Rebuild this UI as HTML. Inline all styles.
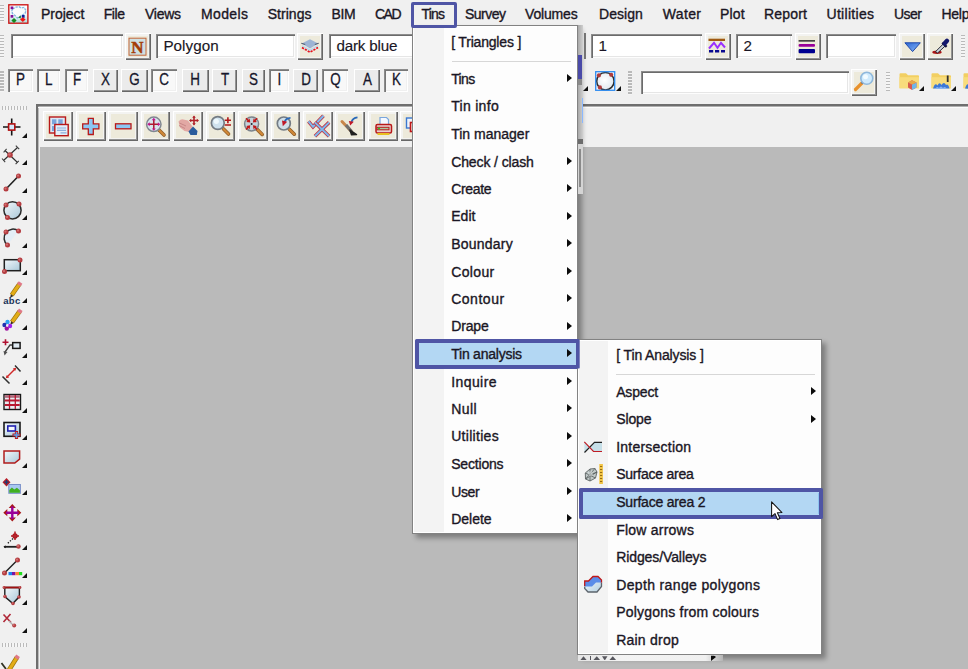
<!DOCTYPE html><html><head><meta charset="utf-8"><title>Tins - Tin analysis - Surface area 2</title><style>
html,body{margin:0;padding:0}
body{width:968px;height:669px;overflow:hidden;background:#f0f0f0;position:relative;font-family:"Liberation Sans",sans-serif;color:#141418;font-size:14px}
.a{position:absolute}
.t{position:absolute;white-space:nowrap;line-height:20px;height:20px;-webkit-text-stroke:.35px #1a1624;color:#1a1624}
.inp{position:absolute;background:#fff;box-shadow:inset 1px 1px 0 #8c8c8c,inset 2px 2px 0 #6b6b6b,inset -1px -1px 0 #fdfdfd,inset -2px -2px 0 #e6e6e6;font-size:15.2px;line-height:24.4px;white-space:nowrap;overflow:hidden;box-sizing:border-box;padding-left:7.4px;color:#1a1624;-webkit-text-stroke:.15px #1a1624}
.btn{position:absolute;background:#f3f3f1;box-shadow:inset 1px 1px 0 #ffffff,inset -1px -1px 0 #676767,inset -2px -2px 0 #939393;box-sizing:border-box}
.btn .f{position:absolute;left:3px;top:2.6px;right:2.7px;bottom:3px;background:#edeadb}
.btn svg{position:absolute;left:0;top:0}
.lb{position:absolute;box-sizing:border-box;text-align:center;font-size:16.8px;line-height:21.6px;color:#15152a}
.lb span{display:inline-block;transform:scaleX(.8);-webkit-text-stroke:.3px #15152a;position:relative;left:.5px}
.lb.up{background:#ebebeb;box-shadow:inset 1px 1px 0 #ffffff,inset -1px -1px 0 #676767,inset -2px -2px 0 #939393}
.lb.dn{background:#f8f8f8;box-shadow:inset 1px 1px 0 #8c8c8c,inset 2px 2px 0 #777,inset -1px -1px 0 #fff,inset -2px -2px 0 #f0f0f0}
.gv{position:absolute;width:4px;background:repeating-linear-gradient(to bottom,#bababa 0,#bababa 1.5px,#f5f5f5 1.5px,#f5f5f5 3px)}
.gh{position:absolute;height:4px;background:repeating-linear-gradient(to right,#bababa 0,#bababa 1.5px,#f5f5f5 1.5px,#f5f5f5 3px)}
.tri{position:absolute;width:0;height:0;border-left:5px solid transparent;border-bottom:5px solid #111}
.menu{position:absolute;background:#fdfdfd;box-sizing:border-box;border:1px solid #828282;box-shadow:4px 4px 5px rgba(0,0,0,.33)}
.menu::after{content:"";position:absolute;left:0;top:0;right:0;bottom:0;border:1px solid #fff}
.menu .gut{position:absolute;left:0;top:0;bottom:0;background:#f3f3f3}
.menu .sep{position:absolute;height:1px;background:#d7d7d7}
.arr{position:absolute;width:0;height:0;border-top:4.7px solid transparent;border-bottom:4.7px solid transparent;border-left:5.8px solid #0c0c0c}
  .hl{position:absolute;box-sizing:border-box;border:4.5px solid #4f55a5;background:#b3d7f3;border-radius:1.5px}
svg{overflow:visible}
</style></head><body>
<div class="gv" style="left:0;top:5px;height:17px"></div>
<svg class="a" style="left:8.2px;top:4px" width="21" height="20" viewBox="0 0 21 20">
<defs><linearGradient id="ag" x1="0" y1="0" x2="0" y2="1"><stop offset="0" stop-color="#ffffff"/><stop offset=".55" stop-color="#f0f6f8"/><stop offset="1" stop-color="#a8dcd8"/></linearGradient></defs>
<rect x="0.8" y="0.8" width="19.1" height="18.4" fill="url(#ag)" stroke="#cc1414" stroke-width="1.35"/>
<path d="M4.5 5 L8 3.2 L11 2.6 L13 4 L16 3.4 L18 6.5 L17 9.5 L13.5 11.5 L9.5 14 L7 11.5 L4.5 9.5 L3.8 7 Z" fill="#fbfdfd" stroke="#7ab4e0" stroke-width="1.3" stroke-dasharray="2.4 1" opacity=".95"/>
<rect x="2.6" y="2.5" width="2.7" height="2.7" fill="#80109c"/><rect x="2.6" y="11" width="2.7" height="2.7" fill="#80109c"/>
<rect x="13.8" y="11" width="2.8" height="2.8" fill="#101c98"/><path d="M10 13.5 l2.8 -2 v3 z" fill="#1c7a2c"/>
<path d="M6 14 l2.6 2.5 -2.6 2.5 -2.6 -2.5 z" fill="#138a20"/>
<path d="M14.8 13.2 l2.8 2.4 -2.8 2.4 -2.8 -2.4 z" fill="#f41414"/>
</svg>
<div class="t" style="left:41.00px;top:4.45px;letter-spacing:-0.012px;">Project</div>
<div class="t" style="left:103.75px;top:4.45px;letter-spacing:-0.436px;">File</div>
<div class="t" style="left:145.00px;top:4.45px;letter-spacing:-0.273px;">Views</div>
<div class="t" style="left:201.00px;top:4.45px;letter-spacing:0.374px;">Models</div>
<div class="t" style="left:267.75px;top:4.45px;letter-spacing:0.030px;">Strings</div>
<div class="t" style="left:331.50px;top:4.45px;letter-spacing:-0.320px;">BIM</div>
<div class="t" style="left:375.00px;top:4.45px;letter-spacing:-1.529px;">CAD</div>
<div class="t" style="left:421.50px;top:4.45px;letter-spacing:-0.810px;">Tins</div>
<div class="t" style="left:465.00px;top:4.45px;letter-spacing:-0.515px;">Survey</div>
<div class="t" style="left:525.00px;top:4.45px;letter-spacing:-0.158px;">Volumes</div>
<div class="t" style="left:599.00px;top:4.45px;letter-spacing:0.034px;">Design</div>
<div class="t" style="left:662.75px;top:4.45px;letter-spacing:0.358px;">Water</div>
<div class="t" style="left:720.00px;top:4.45px;letter-spacing:0.209px;">Plot</div>
<div class="t" style="left:764.00px;top:4.45px;letter-spacing:0.196px;">Report</div>
<div class="t" style="left:826.50px;top:4.45px;letter-spacing:0.298px;">Utilities</div>
<div class="t" style="left:894.00px;top:4.45px;letter-spacing:-0.520px;">User</div>
<div class="t" style="left:941.50px;top:4.45px;letter-spacing:-0.264px;">Help</div>
<div class="gv" style="left:0;top:35px;height:23px"></div>
<div class="inp" style="left:11px;top:34px;width:111.5px;height:23.5px"></div>
<div class="btn" style="left:125px;top:33px;width:25.900000000000006px;height:26.700000000000003px"><div class="f"></div><svg width="26" height="27"><rect x="4" y="5.2" width="17" height="17" fill="#cfe0e2" stroke="#c4673a" stroke-width="1"/><text x="12.5" y="20" text-anchor="middle" font-family="Liberation Serif,serif" font-weight="bold" font-size="17" fill="#a43c08" stroke="#a43c08" stroke-width=".5">N</text></svg></div>
<div class="inp" style="left:156px;top:34px;width:138.5px;height:23.5px"><span style="letter-spacing:0.062px">Polygon</span></div>
<div class="btn" style="left:297px;top:33px;width:26px;height:26.700000000000003px"><div class="f"></div><svg width="26" height="27"><path d="M4.8 10.6 L13 6.3 L21.2 10.6 L13 15.4 Z" fill="#9db4d4"/><path d="M5 12 L13 16.2 L21 12 L21 13.6 L13 18.2 L5 13.6 Z" fill="#bcd8ec"/><path d="M4.3 10.3 L8.2 11.6 M21.7 10.3 L17.8 11.6" stroke="#566070" stroke-width="1.1"/><path d="M5 14.6 L13 19.2 L21 14.6" fill="none" stroke="#e8101c" stroke-width="1.7" stroke-dasharray="2.2 1.1"/></svg></div>
<div class="inp" style="left:329px;top:34px;width:141px;height:23.5px"><span style="letter-spacing:-0.166px">dark blue</span></div>
<div class="a" style="left:583.5px;top:32.5px;width:2px;height:26.5px;background:#7a7a7a"></div>
<div class="inp" style="left:591px;top:34px;width:111px;height:23.5px">1</div>
<div class="btn" style="left:705px;top:33px;width:25.799999999999955px;height:26.700000000000003px"><div class="f"></div><svg width="26" height="27"><rect x="3.5" y="5.7" width="16.5" height="2.3" fill="#a05a12"/><path d="M4 15.5 L9 9.8 L12.5 14.8 L16 9.8 L20 14.5" fill="none" stroke="#9a30ff" stroke-width="2"/><path d="M4 18.2 h16" stroke="#0a0a90" stroke-width="2.4" stroke-dasharray="4.2 1.8"/></svg></div>
<div class="inp" style="left:736px;top:34px;width:56px;height:23.5px">2</div>
<div class="btn" style="left:795px;top:33px;width:25.799999999999955px;height:26.700000000000003px"><div class="f"></div><svg width="26" height="27"><rect x="3.6" y="7" width="16.4" height="1.7" fill="#454545"/><rect x="3.6" y="11" width="16.4" height="2.7" rx="1" fill="#98009a"/><rect x="3.6" y="16" width="16.4" height="4.2" rx="1" fill="#000090"/></svg></div>
<div class="inp" style="left:826px;top:34px;width:70px;height:23.5px"></div>
<div class="btn" style="left:898.5px;top:33px;width:26.200000000000045px;height:26.700000000000003px"><div class="f"></div><svg width="26" height="27"><defs><linearGradient id="tg" x1="0" y1="0" x2="1" y2="1"><stop offset="0" stop-color="#2a66d8"/><stop offset="1" stop-color="#8ab8f4"/></linearGradient></defs><path d="M5.9 9.8 L21.3 9.8 L13.6 18.6 Z" fill="url(#tg)" stroke="#1f48a8" stroke-width="1"/></svg></div>
<div class="btn" style="left:927.2px;top:33px;width:26.199999999999932px;height:26.700000000000003px"><div class="f"></div><svg width="26" height="27"><ellipse cx="10" cy="19.2" rx="4.7" ry="1.7" fill="#a81414"/><path d="M8.6 18.6 L16.6 10.6 L18.6 12.6 L10.6 20 Z" fill="#cfd6dc" stroke="#2a2a34" stroke-width="1"/><path d="M15.3 9.6 L19.6 13.9" stroke="#14143c" stroke-width="2.2"/><path d="M17.6 10.4 L20 7.8" stroke="#14186c" stroke-width="4.4" stroke-linecap="round"/></svg></div>
<div class="gv" style="left:961px;top:35px;height:23.5px"></div>
<div class="gv" style="left:0;top:71px;height:21px"></div>
<div class="lb dn" style="left:8px;top:69px;width:25px;height:23.3px"><span>P</span></div>
<div class="lb dn" style="left:37px;top:69px;width:23px;height:23.3px"><span>L</span></div>
<div class="lb dn" style="left:64.5px;top:69px;width:23.5px;height:23.3px"><span>F</span></div>
<div class="lb up" style="left:92.5px;top:69px;width:25.0px;height:23.3px"><span>X</span></div>
<div class="lb up" style="left:121px;top:69px;width:27px;height:23.3px"><span>G</span></div>
<div class="lb dn" style="left:151px;top:69px;width:26px;height:23.3px"><span>C</span></div>
<div class="lb up" style="left:181.5px;top:69px;width:27.0px;height:23.3px"><span>H</span></div>
<div class="lb up" style="left:212px;top:69px;width:24.5px;height:23.3px"><span>T</span></div>
<div class="lb up" style="left:242px;top:69px;width:23px;height:23.3px"><span>S</span></div>
<div class="lb dn" style="left:269px;top:69px;width:20px;height:23.3px"><span>I</span></div>
<div class="lb up" style="left:292.5px;top:69px;width:25.5px;height:23.3px"><span>D</span></div>
<div class="lb dn" style="left:322px;top:69px;width:25.5px;height:23.3px"><span>Q</span></div>
<div class="lb up" style="left:354px;top:69px;width:26px;height:23.3px"><span>A</span></div>
<div class="lb dn" style="left:384px;top:69px;width:24px;height:23.3px"><span>K</span></div>
<div class="tri" style="left:583px;top:86px"></div>
<svg class="a" style="left:595px;top:71.4px;overflow:hidden" width="21" height="20"><defs><radialGradient id="cg" cx=".45" cy=".45" r=".6"><stop offset="0" stop-color="#ffffff"/><stop offset="1" stop-color="#dfe6ee"/></radialGradient></defs><rect x="0.7" y="0.7" width="19" height="18.6" fill="#f2f5fa"/><circle cx="10.4" cy="10.2" r="8.7" fill="url(#cg)" stroke="#2c2c2c" stroke-width="1.5"/><rect x="0.7" y="0.7" width="19" height="18.6" fill="none" stroke="#2f8cf0" stroke-width="1.3"/><circle cx="3.9" cy="4.4" r="2.1" fill="#b03c3c"/><circle cx="16.2" cy="3.8" r="2.1" fill="#b03c3c"/><circle cx="4.9" cy="16.4" r="2.1" fill="#b03c3c"/></svg>
<div class="tri" style="left:615.5px;top:86px"></div>
<div class="gv" style="left:628px;top:71px;height:24px"></div>
<div class="inp" style="left:641px;top:71px;width:207.5px;height:22.5px"></div>
<div class="btn" style="left:851.2px;top:69.3px;width:25.59999999999991px;height:26.400000000000006px"><div class="f"></div><svg width="26" height="27"><path d="M11.5 13.5 L4.5 20.5" stroke="#e8912c" stroke-width="3.2" stroke-linecap="round"/><path d="M12.8 12 L10.5 14.5" stroke="#707880" stroke-width="2.2"/><circle cx="15.8" cy="9.2" r="6" fill="#cfeafc" stroke="#8fb8dc" stroke-width="1.6"/><circle cx="14.5" cy="7.8" r="2.5" fill="#f2fbff"/></svg></div>
<div class="gv" style="left:886px;top:72px;height:19px"></div>
<svg class="a" style="left:899px;top:72.5px" width="21" height="17"><path d="M0.5 1.3 Q0.5 0.3 1.5 0.3 L7 0.3 L9 2.3 L19 2.3 Q20 2.3 20 3.3 L20 15 L0.5 15 Z" fill="#f2cf62"/><path d="M0.5 4.2 L20 4.2 L20 15.5 L0.5 15.5 Z" fill="#f8dc7c"/><path d="M9 9.5 L13 7.2 L17.5 9.5 L17.5 14.5 L13 17 L9 14.5 Z" fill="#d85a50"/><path d="M13 11.5 L17.5 9.5 L17.5 14.5 L13 17 Z" fill="#6fb6ea"/><path d="M9 9.5 L13 7.2 L17.5 9.5 L13 11.5 Z" fill="#e8a848"/></svg>
<div class="tri" style="left:918.7px;top:85.5px"></div>
<svg class="a" style="left:931px;top:72.5px" width="21" height="17"><path d="M0.5 1.3 Q0.5 0.3 1.5 0.3 L7 0.3 L9 2.3 L19 2.3 Q20 2.3 20 3.3 L20 15 L0.5 15 Z" fill="#f2cf62"/><path d="M0.5 4.2 L20 4.2 L20 15.5 L0.5 15.5 Z" fill="#f8dc7c"/><rect x="15.8" y="2.5" width="1.8" height="6.5" fill="#303030"/><path d="M2 15.5 Q4 9 6.5 12.5 Q8.5 8.5 10.5 12 Q13 8 15 12 Q17 10 18.5 15.5 Z" fill="#3c78d8"/><path d="M4 16 Q6 12.5 8 15 Q10 12 12 15 Q14 12.5 16 16 Z" fill="#8ab4f0"/></svg>
<div class="tri" style="left:951px;top:85.5px"></div>
<svg class="a" style="left:963px;top:72.5px" width="21" height="17"><path d="M0.5 1.3 Q0.5 0.3 1.5 0.3 L7 0.3 L9 2.3 L19 2.3 Q20 2.3 20 3.3 L20 15 L0.5 15 Z" fill="#f2cf62"/><path d="M0.5 4.2 L20 4.2 L20 15.5 L0.5 15.5 Z" fill="#f8dc7c"/><path d="M2 15.5 Q4 9 6.5 12.5 L6.5 16 Z" fill="#3c78d8"/></svg>
<div class="a" style="left:36px;top:104.1px;width:940px;height:600px;background:#f0f0f0;box-shadow:inset 2.4px 2.6px 0 #6e6e6e"></div>
<div class="a" style="left:38.4px;top:106.7px;width:940px;height:1px;background:#fbfbfb"></div>
<div class="a" style="left:40px;top:147px;width:940px;height:540px;background:#bababa"></div>
<div class="btn" style="left:43.40px;top:111.4px;width:29.7px;height:29.9px"><div class="f"></div><svg width="30" height="30" style="left:.5px;top:.8px"><rect x="5.5" y="5" width="16" height="16" fill="#dce8f4" stroke="#b81818" stroke-width="1.4"/><rect x="8" y="7.3" width="4.4" height="5" fill="#7aa6dc"/><rect x="14.3" y="7.3" width="4.4" height="5" fill="#7aa6dc"/><rect x="8" y="14" width="3" height="5" fill="#7aa6dc"/><rect x="10.8" y="12.5" width="13.4" height="11.2" fill="#e4eef8" stroke="#b81818" stroke-width="1.4"/><path d="M13 16 h9 M13 18.3 h9 M16.5 20.8 h6" stroke="#8cb0dc" stroke-width="1.2"/></svg></div>
<div class="btn" style="left:75.85px;top:111.4px;width:29.7px;height:29.9px"><div class="f"></div><svg width="30" height="30" style="left:.5px;top:.8px"><path d="M12.3 6.3 h5 v5.6 h5.6 v5 h-5.6 v5.6 h-5 v-5.6 h-5.6 v-5 h5.6 z" fill="#8cc6f2" stroke="#b81818" stroke-width="1.3"/></svg></div>
<div class="btn" style="left:108.30px;top:111.4px;width:29.7px;height:29.9px"><div class="f"></div><svg width="30" height="30" style="left:.5px;top:.8px"><rect x="6.5" y="11.8" width="15.5" height="5" fill="#8cc6f2" stroke="#b81818" stroke-width="1.3"/></svg></div>
<div class="btn" style="left:140.75px;top:111.4px;width:29.7px;height:29.9px"><div class="f"></div><svg width="30" height="30" style="left:.5px;top:.8px"><path d="M18 18 L23 23" stroke="#8a5a28" stroke-width="3.6" stroke-linecap="round"/><path d="M18 18 L23 23" stroke="#d08838" stroke-width="2.2" stroke-linecap="round"/><circle cx="12.8" cy="12.3" r="7.2" fill="#d8e4ee" stroke="#808890" stroke-width="1.5"/><path d="M7.5 12.3 h10.6 M12.8 7 v10.6" stroke="#b01830" stroke-width="1.5"/><path d="M12.8 5.8 l2 2.4 h-4 z M12.8 18.8 l2 -2.4 h-4 z M6.3 12.3 l2.4 -2 v4 z M19.3 12.3 l-2.4 -2 v4 z" fill="#c01890"/></svg></div>
<div class="btn" style="left:173.20px;top:111.4px;width:29.7px;height:29.9px"><div class="f"></div><svg width="30" height="30" style="left:.5px;top:.8px"><path d="M4.5 9.5 Q7 6.5 9.5 7.5 L14 8.5 L18.5 14.5 L15.5 20 L10.5 19 L6 15.5 Z" fill="#e2a8a4"/><path d="M5.5 11 L12 14 M5 13.5 L11 16.5" stroke="#c88888" stroke-width="1"/><path d="M14.5 19.5 L19 14.5 L23.5 19 L22.8 23 L16.5 23 Z" fill="#2a5c9c"/><path d="M16 8.5 h8 M20 4.5 v8" stroke="#b02028" stroke-width="1.6"/><path d="M20 3.5 l1.8 2.2 h-3.6 z M20 13.5 l1.8 -2.2 h-3.6 z M15 8.5 l2.2 -1.8 v3.6 z M25 8.5 l-2.2 -1.8 v3.6 z" fill="#b02028"/></svg></div>
<div class="btn" style="left:205.65px;top:111.4px;width:29.7px;height:29.9px"><div class="f"></div><svg width="30" height="30" style="left:.5px;top:.8px"><path d="M17.5 17 L22.5 22" stroke="#8a5a28" stroke-width="3.6" stroke-linecap="round"/><path d="M17.5 17 L22.5 22" stroke="#d08838" stroke-width="2.2" stroke-linecap="round"/><circle cx="11.8" cy="11" r="6.4" fill="#cfe2ee" stroke="#747c84" stroke-width="1.7"/><circle cx="10.3" cy="9.3" r="2.6" fill="#eef8fc"/><path d="M18.8 8.2 h6.2 M21.9 5.2 v6 M18.8 13 h6.2" stroke="#b01818" stroke-width="1.6"/></svg></div>
<div class="btn" style="left:238.10px;top:111.4px;width:29.7px;height:29.9px"><div class="f"></div><svg width="30" height="30" style="left:.5px;top:.8px"><path d="M18.3 17.5 L23.2 22.4" stroke="#8a5a28" stroke-width="3.6" stroke-linecap="round"/><path d="M18.3 17.5 L23.2 22.4" stroke="#d08838" stroke-width="2.2" stroke-linecap="round"/><circle cx="12.6" cy="11.9" r="7" fill="#c4d2da" stroke="#7c848c" stroke-width="1.5"/><path d="M7.0 6.3 L9.6 8.9 M7.0 17.5 L9.6 14.9 M18.2 6.3 L15.6 8.9 M18.2 17.5 L15.6 14.9" stroke="#c01818" stroke-width="1.5"/><path d="M11.3 10.6 L7.3 9.9 L10.6 6.6 Z M11.3 13.2 L7.3 13.9 L10.6 17.2 Z M13.9 10.6 L17.9 9.9 L14.6 6.6 Z M13.9 13.2 L17.9 13.9 L14.6 17.2 Z" fill="#c01818"/><circle cx="12.6" cy="11.9" r="1" fill="#202830"/></svg></div>
<div class="btn" style="left:270.55px;top:111.4px;width:29.7px;height:29.9px"><div class="f"></div><svg width="30" height="30" style="left:.5px;top:.8px"><path d="M18.3 17.2 L23.3 22.2" stroke="#8a5a28" stroke-width="3.6" stroke-linecap="round"/><path d="M18.3 17.2 L23.3 22.2" stroke="#d08838" stroke-width="2.2" stroke-linecap="round"/><circle cx="12.8" cy="11.5" r="6.5" fill="#d0dfe9" stroke="#747c84" stroke-width="1.7"/><path d="M19.5 5.8 Q15 6 13.5 10" fill="none" stroke="#2868b8" stroke-width="1.8"/><path d="M11 8.6 l5.2 1.2 -4.4 4.4 z" fill="#c01828"/></svg></div>
<div class="btn" style="left:303.00px;top:111.4px;width:29.7px;height:29.9px"><div class="f"></div><svg width="30" height="30" style="left:.5px;top:.8px"><path d="M4.5 9.3 L9 14.8 L19.5 3.8" fill="none" stroke="#c03444" stroke-width="3.6"/><path d="M4.5 9.3 L9 14.8 L19.5 3.8" fill="none" stroke="#7cb8ee" stroke-width="2"/><path d="M10.9 10.4 L25.1 24.2 M25.1 10.4 L10.9 24.2" stroke="#c03444" stroke-width="3.6"/><path d="M10.9 10.4 L25.1 24.2 M25.1 10.4 L10.9 24.2" stroke="#7cb8ee" stroke-width="2"/></svg></div>
<div class="btn" style="left:335.45px;top:111.4px;width:29.7px;height:29.9px"><div class="f"></div><svg width="30" height="30" style="left:.5px;top:.8px"><path d="M6 9.5 L15 19" stroke="#c8864a" stroke-width="3" stroke-linecap="round"/><path d="M10 13 L15.5 19.5" stroke="#707070" stroke-width="3.2"/><path d="M14 18 L20.5 22.5 L15.5 22.8 Z" fill="#202020" stroke="#202020" stroke-width="1.5" stroke-linejoin="round"/><path d="M21.5 5.3 Q16.5 5.8 15.5 10" fill="none" stroke="#2868b8" stroke-width="1.8"/><path d="M12.8 9 l5 0.8 -3.6 3.8 z" fill="#c01828"/></svg></div>
<div class="btn" style="left:367.90px;top:111.4px;width:29.7px;height:29.9px"><div class="f"></div><svg width="30" height="30" style="left:.5px;top:.8px"><path d="M12 5.5 h6.5 l2 2 v6 h-8.5 z" fill="#f4f8ff" stroke="#7aa6dc" stroke-width="1.2"/><rect x="8" y="12.5" width="15.5" height="8.5" rx="1.5" fill="#e8d0d0" stroke="#b81818" stroke-width="1.5"/><rect x="9" y="15.3" width="12" height="2.5" fill="#a8c8a0" stroke="#b81818" stroke-width="1"/><path d="M9.5 22 h12" stroke="#e8c020" stroke-width="2"/><circle cx="11" cy="16.5" r="1" fill="#20c020"/></svg></div>
<div class="btn" style="left:400.35px;top:111.4px;width:29.7px;height:29.9px"><div class="f"></div><svg width="30" height="30" style="left:.5px;top:.8px"><rect x="5.5" y="6" width="10" height="10" fill="#eef4fc" stroke="#3a78d0" stroke-width="1.4"/><rect x="9.5" y="10.5" width="8" height="9" fill="#f8e8e8" stroke="#c01818" stroke-width="1.6"/></svg></div>
<div class="gh" style="left:2px;top:105.5px;width:25px"></div>
<div class="gh" style="left:2px;top:642.8px;width:25px"></div>
<svg class="a" style="left:0;top:0" width="36" height="669"><defs><linearGradient id="lg" x1="0" y1="0" x2="1" y2="1"><stop offset="0" stop-color="#f4f8fb"/><stop offset="1" stop-color="#a8c8d8"/></linearGradient></defs>
<path d="M3 127 h17.5 M11.7 118.5 v17" stroke="#151515" stroke-width="1.6"/><rect x="8.6" y="123.9" width="6.2" height="6.2" fill="#d4e8fa" stroke="#b01010" stroke-width="1.6"/>
<path d="M3.5 160.5 L17.5 147.5 M5 150.5 L17.5 162.5" stroke="#303030" stroke-width="1.15"/><path d="M2 158.5 l3.2 3.6 M15.8 145.6 l3.4 3.6 M3.6 152.3 l3 -3.4 M15.6 164.2 l3.2 -3.4" stroke="#404040" stroke-width="1.1"/><circle cx="10" cy="155" r="2.8" fill="#b43c40"/><circle cx="9.5" cy="154.5" r="1.26" fill="#d07070"/>
<path d="M6 189 L18.5 176" stroke="#202020" stroke-width="1.6"/><circle cx="6" cy="189" r="2.5" fill="#b43c40"/><circle cx="5.5" cy="188.5" r="1.125" fill="#d07070"/><circle cx="18.5" cy="176" r="2.5" fill="#b43c40"/><circle cx="18.0" cy="175.5" r="1.125" fill="#d07070"/>
<circle cx="12.5" cy="210.3" r="8.6" fill="url(#lg)" stroke="#2a2a2a" stroke-width="1.5"/><circle cx="6" cy="205" r="2.5" fill="#b43c40"/><circle cx="5.5" cy="204.5" r="1.125" fill="#d07070"/><circle cx="19" cy="204" r="2.5" fill="#b43c40"/><circle cx="18.5" cy="203.5" r="1.125" fill="#d07070"/><circle cx="7.5" cy="217.5" r="2.5" fill="#b43c40"/><circle cx="7.0" cy="217.0" r="1.125" fill="#d07070"/>
<path d="M18.5 231 A8.8 8.8 0 0 0 7.5 245" fill="#e4eef6" stroke="#2a2a2a" stroke-width="1.5"/><circle cx="6" cy="232" r="2.5" fill="#b43c40"/><circle cx="5.5" cy="231.5" r="1.125" fill="#d07070"/><circle cx="18.5" cy="231" r="2.5" fill="#b43c40"/><circle cx="18.0" cy="230.5" r="1.125" fill="#d07070"/><circle cx="7.5" cy="245" r="2.5" fill="#b43c40"/><circle cx="7.0" cy="244.5" r="1.125" fill="#d07070"/>
<rect x="4.3" y="259.7" width="16" height="11" fill="url(#lg)" stroke="#202020" stroke-width="1.5"/><circle cx="20" cy="260" r="2.5" fill="#b43c40"/><circle cx="19.5" cy="259.5" r="1.125" fill="#d07070"/><circle cx="4.5" cy="271.5" r="2.5" fill="#b43c40"/><circle cx="4.0" cy="271.0" r="1.125" fill="#d07070"/>
<path d="M11.8 295 L19.6 283.8" stroke="#9a7208" stroke-width="4.6"/><path d="M11.8 295 L19.6 283.8" stroke="#e2ac18" stroke-width="3.2"/><path d="M18.8 285 L20.6 282.4" stroke="#e07888" stroke-width="4.4"/><path d="M10 298 l0.9 -3.8 2.6 1.8 z" fill="#3a3020"/><text x="3.2" y="303.8" font-size="9.5" font-weight="bold" fill="#1a3358" font-family="Liberation Sans,sans-serif" textLength="17">abc</text>
<path d="M12 322 L19.8 311.2" stroke="#9a7208" stroke-width="4.6"/><path d="M12 322 L19.8 311.2" stroke="#e2ac18" stroke-width="3.2"/><path d="M19 312.4 L20.8 309.8" stroke="#e07888" stroke-width="4.4"/><path d="M10.2 325 l0.9 -3.8 2.6 1.8 z" fill="#3a3020"/><circle cx="7.5" cy="322" r="2.2" fill="#30a0f0"/><circle cx="4.5" cy="325" r="2.2" fill="#2030b0"/><circle cx="10" cy="326" r="2.2" fill="#a020f0"/><circle cx="6.8" cy="328.5" r="2.2" fill="#a010a0"/><circle cx="7.2" cy="325.5" r="1.2" fill="#f0f0f0"/>
<path d="M2.5 342.3 h6 M5.5 339.3 v6" stroke="#b01030" stroke-width="1.6"/><path d="M12.5 345 h-2.5 L5 352" fill="none" stroke="#404040" stroke-width="1.3"/><path d="M3.5 351 l1 4.5 3 -3.5 z" fill="#505050"/><rect x="12.7" y="342.6" width="7.4" height="5.8" fill="#dfeaf2" stroke="#181818" stroke-width="1.5"/>
<path d="M2.5 376.5 L9.5 383.5 M15 365.5 L20.5 371.5" stroke="#303030" stroke-width="1.5"/><path d="M6.5 377.5 L15.5 368.5" stroke="#d02828" stroke-width="1.4"/><path d="M5.8 378.3 l3.4 -0.8 -2.4 -2.4 z M16.2 367.7 l-3.4 0.8 2.4 2.4 z" fill="#d02828"/>
<rect x="4" y="394.5" width="16.5" height="15" fill="#e8eef2" stroke="#181818" stroke-width="1.4"/><rect x="4.7" y="395.2" width="15.1" height="2.6" fill="#b0687a"/><path d="M4.7 400.5 h15 M4.7 405 h15" stroke="#b81830" stroke-width="1.8"/><path d="M9.5 395 v14 M15.3 395 v14" stroke="#b81830" stroke-width="1.3"/>
<rect x="4" y="422.5" width="16" height="13.8" fill="url(#lg)" stroke="#181818" stroke-width="1.6"/><rect x="7.8" y="426" width="7.6" height="5" fill="#f4f8fc" stroke="#2020b0" stroke-width="1.6"/><path d="M16.5 431 v8 M12.5 435 h8" stroke="#c01818" stroke-width="3.2"/><path d="M16.5 432 v6 M13.5 435 h6" stroke="#58a0e8" stroke-width="1.6"/>
<path d="M4 451 h15.6 v8.2 l-4.8 3.8 h-10.8 z" fill="url(#lg)" stroke="#b01c1c" stroke-width="1.5"/>
<path d="M6.5 478 l4 4.2 -4 4.2 -4 -4.2 z" fill="#b81c28"/><path d="M6.5 480 v4.4 M4.3 482.2 h4.4" stroke="#183c78" stroke-width="1.3"/><rect x="8.8" y="484.5" width="11.6" height="8.8" fill="#a8c8f0" stroke="#7890c8" stroke-width="1"/><path d="M9.3 492.8 v-2.8 l2.6 -2.6 2.4 2 2.6 -1.6 3 2.4 v2.6 z" fill="#40b020"/>
<path d="M12.3 504 l3.6 4 h-7.2 z M12.3 521.5 l3.6 -4 h-7.2 z M3.3 512.7 l4 -3.6 v7.2 z M21.3 512.7 l-4 -3.6 v7.2 z" fill="#a81818"/><path d="M6 512.7 h12.6 M12.3 506.5 v12.4" stroke="#980098" stroke-width="2.4"/>
<path d="M11 536 h8 M15 531.5 v8.5" stroke="#b01820" stroke-width="1.5"/><circle cx="15" cy="536" r="2" fill="none" stroke="#b01820" stroke-width="1.3"/><path d="M13 538.5 L7 544" stroke="#202020" stroke-width="1.3" stroke-dasharray="1.4 1.4"/><path d="M4 546.8 h13" stroke="#202020" stroke-width="1.8"/><path d="M3.3 546.8 l2.6 -1.4 v2.8 z" fill="#202020"/><circle cx="18.5" cy="546.5" r="2.2" fill="#b43c40"/><circle cx="18.0" cy="546.0" r="0.9900000000000001" fill="#d07070"/>
<path d="M4.5 573 L17.5 560" stroke="#202020" stroke-width="1.5"/><circle cx="4.5" cy="573" r="2.5" fill="#b43c40"/><circle cx="4.0" cy="572.5" r="1.125" fill="#d07070"/><circle cx="17.5" cy="560" r="2.5" fill="#b43c40"/><circle cx="17.0" cy="559.5" r="1.125" fill="#d07070"/><rect x="8.5" y="572" width="3.5" height="3.2" fill="#1880f0"/><rect x="12" y="572" width="3.5" height="3.2" fill="#8010a0"/><rect x="15.5" y="572" width="3.5" height="3.2" fill="#ff8030"/><rect x="19" y="572" width="3.2" height="3.2" fill="#20e020"/>
<path d="M4.8 587.5 H19.4 V596.6 L12.8 603.6 L4.8 596.6 Z" fill="url(#lg)" stroke="#202020" stroke-width="1.4"/><path d="M3 587.5 h17.5" stroke="#a01010" stroke-width="1.8"/><circle cx="5" cy="596.5" r="1.8" fill="#b43c40"/><circle cx="4.5" cy="596.0" r="0.81" fill="#d07070"/><circle cx="19" cy="597" r="1.8" fill="#b43c40"/><circle cx="18.5" cy="596.5" r="0.81" fill="#d07070"/><circle cx="13" cy="603.5" r="1.8" fill="#b43c40"/><circle cx="12.5" cy="603.0" r="0.81" fill="#d07070"/><circle cx="4" cy="587.5" r="1.4" fill="#b43c40"/><circle cx="3.5" cy="587.0" r="0.63" fill="#d07070"/><circle cx="20" cy="587.5" r="1.4" fill="#b43c40"/><circle cx="19.5" cy="587.0" r="0.63" fill="#d07070"/>
<path d="M3.5 614.5 L11 622.5 M10.5 614 L3.5 622" stroke="#b02838" stroke-width="1.6"/><path d="M9 621 L14 626" stroke="#b0b0b0" stroke-width="1.2"/><circle cx="14.2" cy="625.5" r="2" fill="#b43c40"/><circle cx="13.7" cy="625.0" r="0.9" fill="#d07070"/>
<path d="M9 670 L17.2 657" stroke="#9a7208" stroke-width="4.6"/><path d="M9 670 L17.2 657" stroke="#e2ac18" stroke-width="3.2"/><path d="M16.3 658.4 L18.1 655.8" stroke="#e07888" stroke-width="4.4"/><path d="M1.5 663 L6 669" stroke="#303020" stroke-width="1.8"/>
</svg>
<div class="tri" style="left:22px;top:132.5px"></div>
<div class="tri" style="left:22px;top:160.0px"></div>
<div class="tri" style="left:22px;top:187.5px"></div>
<div class="tri" style="left:22px;top:215.0px"></div>
<div class="tri" style="left:22px;top:242.5px"></div>
<div class="tri" style="left:22px;top:270.0px"></div>
<div class="tri" style="left:22px;top:297.5px"></div>
<div class="tri" style="left:22px;top:325.0px"></div>
<div class="tri" style="left:22px;top:352.5px"></div>
<div class="tri" style="left:22px;top:380.0px"></div>
<div class="tri" style="left:22px;top:407.5px"></div>
<div class="tri" style="left:22px;top:435.0px"></div>
<div class="tri" style="left:22px;top:462.5px"></div>
<div class="tri" style="left:22px;top:489.5px"></div>
<div class="tri" style="left:22px;top:517.5px"></div>
<div class="tri" style="left:22px;top:545.0px"></div>
<div class="tri" style="left:22px;top:572.5px"></div>
<div class="tri" style="left:22px;top:599.5px"></div>
<div class="tri" style="left:22px;top:627.5px"></div>
<div class="menu" style="left:411.9px;top:24.8px;width:166px;height:509.7px"><div class="gut" style="width:31px"></div><div class="sep" style="left:39px;top:35.2px;width:119px"></div></div>
<div class="a" style="left:577.5px;top:25px;width:5px;height:115px;background:linear-gradient(to right,#a8a8a8,#d0d0d0)"></div>
<div class="a" style="left:578px;top:55.3px;width:3.5px;height:24px;background:#4a4aa8"></div>
<div class="a" style="left:578px;top:79.2px;width:3.5px;height:5.4px;background:#8a8a8a"></div>
<div class="a" style="left:577.5px;top:139.4px;width:5.3px;height:4.2px;background:#6c6c6c"></div>
<div class="a" style="left:577.5px;top:143.6px;width:5.3px;height:50px;background:#d4d4d4"></div>
<div class="a" style="left:578.5px;top:149px;width:2.8px;height:38px;background:#8a8a8a"></div>
<div class="a" style="left:582.2px;top:98px;width:.8px;height:25px;background:#8ab8ff"></div>
<div class="a" style="left:575.2px;top:343px;width:1px;height:21px;background:#8ec4f0"></div>
<div class="hl" style="left:415px;top:338.5px;width:164.7px;height:30px"></div>
<div class="t" style="left:451.20px;top:31.85px;letter-spacing:-0.189px;">[ Triangles ]</div>
<div class="t" style="left:451.20px;top:68.85px;letter-spacing:-0.643px;">Tins</div>
<div class="arr" style="left:566.6px;top:73.90px"></div>
<div class="t" style="left:451.20px;top:96.35px;letter-spacing:0.301px;">Tin info</div>
<div class="t" style="left:451.20px;top:123.85px;letter-spacing:0.003px;">Tin manager</div>
<div class="t" style="left:451.20px;top:151.55px;letter-spacing:-0.111px;">Check / clash</div>
<div class="arr" style="left:566.6px;top:156.60px"></div>
<div class="t" style="left:451.20px;top:178.95px;letter-spacing:-0.324px;">Create</div>
<div class="arr" style="left:566.6px;top:184.00px"></div>
<div class="t" style="left:451.20px;top:206.45px;letter-spacing:0.059px;">Edit</div>
<div class="arr" style="left:566.6px;top:211.50px"></div>
<div class="t" style="left:451.20px;top:233.95px;letter-spacing:0.224px;">Boundary</div>
<div class="arr" style="left:566.6px;top:239.00px"></div>
<div class="t" style="left:451.20px;top:261.55px;letter-spacing:0.352px;">Colour</div>
<div class="arr" style="left:566.6px;top:266.60px"></div>
<div class="t" style="left:451.20px;top:288.95px;letter-spacing:0.516px;">Contour</div>
<div class="arr" style="left:566.6px;top:294.00px"></div>
<div class="t" style="left:451.20px;top:316.45px;letter-spacing:-0.133px;">Drape</div>
<div class="arr" style="left:566.6px;top:321.50px"></div>
<div class="t" style="left:451.20px;top:343.95px;letter-spacing:-0.227px;">Tin analysis</div>
<div class="arr" style="left:566.6px;top:349.00px"></div>
<div class="t" style="left:451.20px;top:371.55px;letter-spacing:0.416px;">Inquire</div>
<div class="arr" style="left:566.6px;top:376.60px"></div>
<div class="t" style="left:451.20px;top:398.95px;letter-spacing:0.461px;">Null</div>
<div class="arr" style="left:566.6px;top:404.00px"></div>
<div class="t" style="left:451.20px;top:426.45px;letter-spacing:0.298px;">Utilities</div>
<div class="arr" style="left:566.6px;top:431.50px"></div>
<div class="t" style="left:451.20px;top:453.95px;letter-spacing:-0.185px;">Sections</div>
<div class="arr" style="left:566.6px;top:459.00px"></div>
<div class="t" style="left:451.20px;top:481.55px;letter-spacing:-0.353px;">User</div>
<div class="arr" style="left:566.6px;top:486.60px"></div>
<div class="t" style="left:451.20px;top:509.05px;letter-spacing:-0.014px;">Delete</div>
<div class="arr" style="left:566.6px;top:514.10px"></div>
<div class="menu" style="left:577.4px;top:338.6px;width:244.6px;height:316.8px"><div class="gut" style="width:29.6px"></div><div class="sep" style="left:38px;top:34.7px;width:198.5px"></div></div>
<div class="hl" style="left:415px;top:338.5px;width:164.7px;height:30px;background:transparent;clip-path:inset(0 0 0 158px)"></div>
<div class="hl" style="left:579px;top:488px;width:244px;height:30.5px"></div>
<div class="a" style="left:818.3px;top:492.5px;width:1px;height:21.5px;background:#8ec4f0"></div>
<div class="t" style="left:616.20px;top:344.65px;letter-spacing:-0.119px;">[ Tin Analysis ]</div>
<div class="t" style="left:616.20px;top:381.95px;letter-spacing:-0.180px;">Aspect</div>
<div class="arr" style="left:810.7px;top:387.00px"></div>
<div class="t" style="left:616.20px;top:409.45px;letter-spacing:-0.127px;">Slope</div>
<div class="arr" style="left:810.7px;top:414.50px"></div>
<div class="t" style="left:616.20px;top:436.95px;letter-spacing:0.230px;">Intersection</div>
<div class="t" style="left:616.20px;top:464.45px;letter-spacing:-0.224px;">Surface area</div>
<div class="t" style="left:616.20px;top:491.95px;letter-spacing:-0.195px;">Surface area 2</div>
<div class="t" style="left:616.20px;top:519.55px;letter-spacing:0.224px;">Flow arrows</div>
<div class="t" style="left:616.20px;top:547.05px;letter-spacing:-0.097px;">Ridges/Valleys</div>
<div class="t" style="left:616.20px;top:574.55px;letter-spacing:0.359px;">Depth range polygons</div>
<div class="t" style="left:616.20px;top:602.15px;letter-spacing:0.210px;">Polygons from colours</div>
<div class="t" style="left:616.20px;top:629.75px;letter-spacing:0.225px;">Rain drop</div>
<div class="a" style="left:578px;top:655.2px;width:145px;height:5.7px;background:linear-gradient(to right,#e4e4e4 0,#f4f4f4 30%,#f0f0f0 88%,#b4b4b4 100%)"></div>
<div class="a" style="left:580px;top:656.2px;width:7px;height:4.2px;background:#3c3c44;clip-path:polygon(50% 0,100% 100%,0 100%);opacity:.85"></div>
<div class="a" style="left:589.5px;top:656.2px;width:1.6px;height:4.2px;background:#3c3c44;clip-path:none;opacity:.85"></div>
<div class="a" style="left:593px;top:656.2px;width:7.5px;height:4.2px;background:#3c3c44;clip-path:polygon(50% 0,100% 100%,0 100%);opacity:.85"></div>
<div class="a" style="left:602px;top:656.2px;width:5.5px;height:4.2px;background:#3c3c44;clip-path:polygon(0 0,100% 0,50% 100%);opacity:.85"></div>
<div class="a" style="left:609px;top:656.2px;width:7.5px;height:4.2px;background:#3c3c44;clip-path:polygon(50% 0,100% 100%,0 100%);opacity:.85"></div>
<div class="arr" style="left:711px;top:653.2px;clip-path:inset(2.5px 0 0 0)"></div>
<svg class="a" style="left:583px;top:438px" width="24" height="18"><path d="M1.4 4 L6.5 9 L1.4 14.5 Z M6.5 9 L11.5 4.3 H19 V13.5 H10.5 Z" fill="#c6dfe8"/><path d="M1.5 14.5 L11.5 4.3 H19" fill="none" stroke="#202020" stroke-width="1.2"/><path d="M1.3 3.8 L10.5 13.5 H19" fill="none" stroke="#c01c24" stroke-width="1.2"/></svg>
<svg class="a" style="left:583px;top:463px" width="24" height="22"><path d="M2.3 10 L7 6 L12 5.5 L14 9 L12.5 15 L7 18 L2.5 16 Z" fill="#c0c8c8" stroke="#6a7070" stroke-width="1"/><path d="M2.3 10 L12.5 15 M7 6 L7 18 M12 5.5 L2.5 16 M14 9 L2.5 16 M7.2 11.8 L14 9" stroke="#565c5c" stroke-width=".8"/><path d="M5 9 L9 8 L10 12.5 L6 13.5 Z" fill="#d8e0e0" opacity=".6"/><rect x="16.3" y="1" width="3.6" height="20" fill="#f2c445"/><path d="M17 3.5 h2.2 M17 6.5 h2.2 M17 9.5 h2.2 M17 12.5 h2.2 M17 15.5 h2.2 M17 18.5 h2.2" stroke="#8a6410" stroke-width=".9"/></svg>
<svg class="a" style="left:583px;top:573px" width="24" height="22"><defs><linearGradient id="dg" x1="0" y1="0" x2="1" y2="1"><stop offset="0" stop-color="#f6fafc"/><stop offset="1" stop-color="#b4cfe0"/></linearGradient></defs><path d="M1.7 8 H5.5 L10 3.5 H15 L18.5 7 V13.5 L14 19 H5 L1.5 15.5 Z" fill="url(#dg)"/><path d="M1.7 8 H5.5 L10 3.5 H15 L18.5 7 V9.5 H13 L9 13.5 H1.7 Z" fill="#5a8ce8"/><path d="M1.7 13.5 V15.5 L5 19 H14 L18.5 13.5 V9.5" fill="none" stroke="#5c646c" stroke-width="1.3"/><path d="M1.7 13 V8 H5.5 L10 3.5 H15 L18.5 7 V9.5" fill="none" stroke="#c01818" stroke-width="1.3"/></svg>
<div class="a" style="left:411px;top:2px;width:46px;height:25.5px;box-sizing:border-box;border:3.6px solid #4f55a5;border-radius:2px"></div>
<svg class="a" style="left:771px;top:500.5px" width="13" height="20"><path d="M0.6 0.8 L0.6 15.6 L4 12.6 L6.6 18.6 L9 17.6 L6.4 11.8 L11 11.6 Z" fill="#fff" stroke="#111" stroke-width="1.05" stroke-linejoin="round"/></svg>
</body></html>
